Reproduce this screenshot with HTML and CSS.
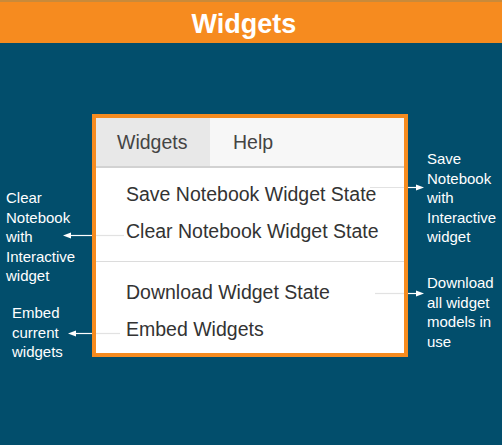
FILE: index.html
```html
<!DOCTYPE html>
<html>
<head>
<meta charset="utf-8">
<link rel="stylesheet" href="styles.css">
</head>
<body>
<header class="banner"><h1 class="title">Widgets</h1></header>
<main class="stage">
  <div class="menu">
    <div class="menubar">
      <div class="tab tab-active">Widgets</div>
      <div class="tab">Help</div>
    </div>
    <ul class="items">
      <li class="item">Save Notebook Widget State</li>
      <li class="item">Clear Notebook Widget State</li>
      <li class="divider"></li>
      <li class="item">Download Widget State</li>
      <li class="item">Embed Widgets</li>
    </ul>
  </div>
  <p class="note note-clear">Clear<br>Notebook<br>with<br>Interactive<br>widget</p>
  <p class="note note-embed">Embed<br>current<br>widgets</p>
  <p class="note note-save">Save<br>Notebook<br>with<br>Interactive<br>widget</p>
  <p class="note note-download">Download<br>all widget<br>models in<br>use</p>
  <svg class="arrows" width="502" height="402" viewBox="0 0 502 402">
    <g stroke-width="1.2" fill="none">
      <line x1="68" y1="192.5" x2="92" y2="192.5" stroke="#ffffff"/>
      <line x1="96" y1="192.5" x2="124" y2="192.5" stroke="#e2e2e2"/>
      <line x1="73" y1="290.5" x2="92" y2="290.5" stroke="#ffffff"/>
      <line x1="96" y1="290.5" x2="120" y2="290.5" stroke="#e2e2e2"/>
      <line x1="370" y1="144.5" x2="404" y2="144.5" stroke="#e2e2e2"/>
      <line x1="408" y1="144.5" x2="419" y2="144.5" stroke="#ffffff"/>
      <line x1="375" y1="250.5" x2="404" y2="250.5" stroke="#e2e2e2"/>
      <line x1="408" y1="250.5" x2="419" y2="250.5" stroke="#ffffff"/>
    </g>
    <g fill="#ffffff">
      <polygon points="63,192.5 71,189.5 71,195.5"/>
      <polygon points="68,290.5 76,287.5 76,293.5"/>
      <polygon points="424,144.5 416,141.5 416,147.5"/>
      <polygon points="424,250.5 416,247.5 416,253.5"/>
    </g>
  </svg>
</main>
</body>
</html>
```
FILE: styles.css
```css
* { box-sizing: border-box; }
html, body { margin: 0; padding: 0; }
body {
  width: 502px;
  height: 445px;
  overflow: hidden;
  background: #024e6c;
  font-family: "Liberation Sans", Arial, sans-serif;
}
.banner {
  height: 43px;
  border-top: 2px solid #c98a3a;
  background: #f68b1f;
  display: flex;
  align-items: center;
  justify-content: center;
  padding-right: 14px;
}
.title {
  margin: 0;
  color: #ffffff;
  font-size: 27px;
  font-weight: bold;
  line-height: 1;
  padding-top: 3px;
}
.stage {
  position: relative;
  height: 402px;
  padding-top: 71px;
}
.menu {
  margin-left: 92px;
  width: 316px;
  height: 243px;
  border: 4px solid #f68b1f;
  background: #ffffff;
  color: #333333;
  font-size: 19.5px;
}
.menubar {
  display: flex;
  height: 50px;
  background: #f7f7f7;
  border-bottom: 2px solid #d2d2d2;
}
.tab {
  line-height: 48px;
  padding-left: 23px;
  color: #444444;
}
.tab-active {
  width: 114px;
  padding-left: 21px;
  background: #e8e8e8;
}
.items {
  list-style: none;
  margin: 0;
  padding: 8px 0 3px 0;
}
.item {
  line-height: 37px;
  padding-left: 30px;
  white-space: nowrap;
}
.divider {
  height: 1px;
  margin: 11px 0 12px 0;
  background: #dcdcdc;
}
.note {
  position: absolute;
  margin: 0;
  color: #ffffff;
  font-size: 15px;
  line-height: 19.5px;
}
.note-clear { left: 6px; top: 145px; }
.note-embed { left: 12px; top: 260px; }
.note-save { left: 427px; top: 106px; }
.note-download { left: 427px; top: 230px; }
.arrows {
  position: absolute;
  left: 0;
  top: 0;
  pointer-events: none;
}
```
